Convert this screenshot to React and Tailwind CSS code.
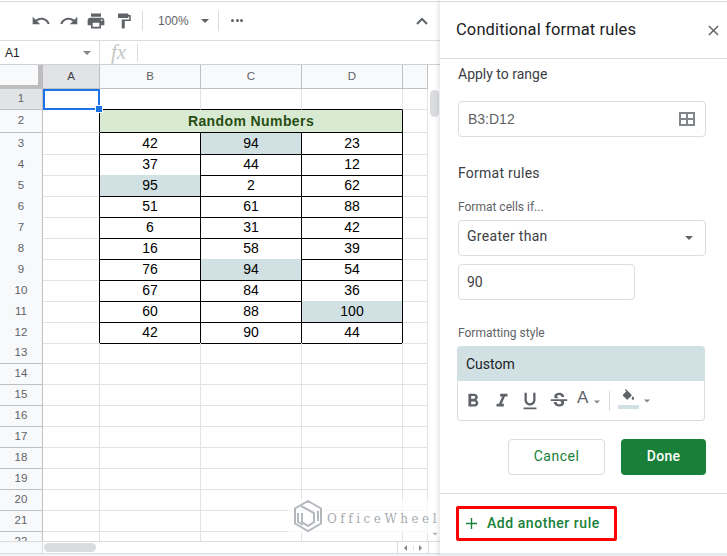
import { MdFormatBold, MdFormatItalic, MdFormatUnderlined, MdStrikethroughS } from 'react-icons/md'

const DATA = [
  [42, 94, 23],
  [37, 44, 12],
  [95, 2, 62],
  [51, 61, 88],
  [6, 31, 42],
  [16, 58, 39],
  [76, 94, 54],
  [67, 84, 36],
  [60, 88, 100],
  [42, 90, 44],
]

const EMPTY_ROWS = [13, 14, 15, 16, 17, 18, 19, 20, 21, 22]
const GRID_COLS = 'grid grid-cols-[43px_57px_101px_101px_101px_25px]'
const ARIAL = "font-['Liberation_Sans',Arial,sans-serif]"
const GOOGLE = "font-['Roboto','Noto_Sans',sans-serif]"

function Icon({ d, className }) {
  return (
    <svg viewBox="0 0 24 24" className={className} fill="currentColor">
      <path d={d} />
    </svg>
  )
}

function Caret({ className }) {
  return <div className={`w-0 h-0 border-x-[4px] border-x-transparent border-t-[4px] ${className}`} />
}

function Toolbar() {
  return (
    <div className="h-[39px] border-b border-[#dadce0] flex items-center text-[#5f6368] pb-[1px]">
      <Icon className="w-[20px] h-[20px] ml-[31px]" d="M12.5 8c-2.65 0-5.05.99-6.9 2.6L2 7v9h9l-3.62-3.62c1.39-1.16 3.16-1.88 5.12-1.88 3.54 0 6.55 2.31 7.6 5.5l2.37-.78C21.08 11.03 17.15 8 12.5 8z" />
      <Icon className="w-[20px] h-[20px] ml-[8px]" d="M18.4 10.6C16.55 8.99 14.15 8 11.5 8c-4.65 0-8.58 3.03-9.96 7.22L3.9 16c1.05-3.19 4.05-5.5 7.6-5.5 1.95 0 3.73.72 5.12 1.88L13 16h9V7l-3.6 3.6z" />
      <Icon className="w-[20px] h-[20px] ml-[7px]" d="M19 8H5c-1.66 0-3 1.34-3 3v6h4v4h12v-4h4v-6c0-1.66-1.34-3-3-3zm-3 11H8v-5h8v5zm3-7c-.55 0-1-.45-1-1s.45-1 1-1 1 .45 1 1-.45 1-1 1zm-1-9H6v4h12V3z" />
      <Icon className="w-[18px] h-[18px] ml-[9px]" d="M18 4V3c0-.55-.45-1-1-1H5c-.55 0-1 .45-1 1v4c0 .55.45 1 1 1h12c.55 0 1-.45 1-1V6h1v4H9v11c0 .55.45 1 1 1h2c.55 0 1-.45 1-1v-9h8V4h-3z" />
      <div className="w-px h-[20px] bg-[#dadce0] ml-[9px]" />
      <span className={`${ARIAL} text-[12px] ml-[15px] w-[42px]`}>100%</span>
      <Caret className="border-t-[#5f6368] ml-[1px]" />
      <div className="w-px h-[20px] bg-[#dadce0] ml-[9px]" />
      <div className="flex gap-[1.5px] ml-[12px]">
        <div className="w-[3px] h-[3px] rounded-full bg-[#5f6368]" />
        <div className="w-[3px] h-[3px] rounded-full bg-[#5f6368]" />
        <div className="w-[3px] h-[3px] rounded-full bg-[#5f6368]" />
      </div>
      <svg viewBox="0 0 12 8" className="w-[12px] h-[8px] ml-auto mr-[12px]" fill="none" stroke="#5f6368" strokeWidth="2">
        <path d="M1 7l5-5 5 5" />
      </svg>
    </div>
  )
}

function FormulaBar() {
  return (
    <div className={`h-[24px] border-b border-[#cfd1d4] flex items-center ${ARIAL}`}>
      <div className="w-[100px] h-full border-r border-[#dadce0] flex items-center pl-[5px] pr-[8px] text-[12px] text-[#202124]">
        <span>A1</span>
        <Caret className="border-t-[#80868b] ml-auto" />
      </div>
      <div className="w-[38px] h-[18px] border-r border-[#dadce0] flex items-center justify-center">
        <span className="font-['Liberation_Serif',serif] italic text-[21px] text-[#c4c7c5]">fx</span>
      </div>
    </div>
  )
}

function HeaderRow() {
  return (
    <div className={`${GRID_COLS} h-[24px] border-b border-[#c0c0c0] bg-[#f8f9fa] text-[11.5px] text-[#5f6368]`}>
      <div className="border-r-[5px] border-b-[3px] border-[#bdbdbd] bg-[#f8f9fa] w-[43px] h-[23px]" />
      <div className="border-r border-[#c0c0c0] bg-[#e2e3e6] flex items-center justify-center text-[#3c4043]">A</div>
      <div className="border-r border-[#c0c0c0] flex items-center justify-center">B</div>
      <div className="border-r border-[#c0c0c0] flex items-center justify-center">C</div>
      <div className="border-r border-[#c0c0c0] flex items-center justify-center">D</div>
      <div className="border-r border-[#c0c0c0]" />
    </div>
  )
}

function RowNum({ n, active }) {
  return (
    <div className={`border-r border-b border-[#c0c0c0] flex items-center justify-center text-[11.5px] text-[#5f6368] ${active ? 'bg-[#e2e3e6]' : 'bg-[#f8f9fa]'}`}>
      {n}
    </div>
  )
}

function DataRow({ n, values }) {
  return (
    <div className={`${GRID_COLS} h-[21px] text-[14px] text-black`}>
      <RowNum n={n} />
      <div className="border-r border-b border-r-black border-b-[#e2e3e3]" />
      {values.map((v, i) => (
        <div key={i} className={`border-r border-b border-black flex items-center justify-center ${v > 90 ? 'bg-[#d0e0e3]' : ''}`}>
          {v}
        </div>
      ))}
      <div className="border-r border-b border-[#e2e3e3]" />
    </div>
  )
}

function Sheet() {
  return (
    <div className={`relative flex-1 min-h-0 overflow-hidden ${ARIAL}`}>
      <div className="flex h-full">
        <div className="w-[428px] overflow-hidden">
          <HeaderRow />
          <div className={`${GRID_COLS} h-[21px]`}>
            <RowNum n={1} active />
            <div className="border-r border-b border-[#e2e3e3]" />
            <div className="border-r border-b border-r-[#e2e3e3] border-b-black" />
            <div className="border-r border-b border-r-[#e2e3e3] border-b-black" />
            <div className="border-r border-b border-r-[#e2e3e3] border-b-black" />
            <div className="border-r border-b border-[#e2e3e3]" />
          </div>
          <div className={`${GRID_COLS} h-[23px]`}>
            <RowNum n={2} />
            <div className="border-r border-b border-r-black border-b-[#e2e3e3]" />
            <div className="col-span-3 border-r border-b border-black bg-[#d9ead3] text-[#274e13] font-bold text-[14px] tracking-[0.4px] flex items-center justify-center">
              Random Numbers
            </div>
            <div className="border-r border-b border-[#e2e3e3]" />
          </div>
          {DATA.map((values, i) => (
            <DataRow key={i} n={i + 3} values={values} />
          ))}
          {EMPTY_ROWS.map(n => (
            <div key={n} className={`${GRID_COLS} h-[21px]`}>
              <RowNum n={n} />
              <div className="border-r border-b border-[#e2e3e3]" />
              <div className="border-r border-b border-[#e2e3e3]" />
              <div className="border-r border-b border-[#e2e3e3]" />
              <div className="border-r border-b border-[#e2e3e3]" />
              <div className="border-r border-b border-[#e2e3e3]" />
            </div>
          ))}
        </div>
        <div className="w-[12px] pl-[2px] pt-[25px] pb-[5px] flex flex-col">
          <div className="w-[9px] h-[27px] rounded-full bg-[#dadce0]" />
          <Caret className="border-t-[#b0b3b8] mt-auto ml-[1px] scale-75" />
        </div>
      </div>
      {/* selected cell */}
      <div className="absolute left-[43px] top-[24px] w-[57px] h-[21px] border-2 border-[#1a73e8]" />
      <div className="absolute left-[96px] top-[41px] w-[6px] h-[6px] bg-[#1a73e8] outline outline-1 outline-white" />
      <Watermark />
    </div>
  )
}

function Watermark() {
  return (
    <div className="absolute left-[288px] top-[434px] w-[152px] h-[34px] bg-white/70 flex items-center">
      <svg viewBox="0 0 30 32" className="w-[30px] h-[32px] ml-[5px]" fill="none" stroke="#b4b8bd" strokeWidth="2">
        <path d="M15 1l13 7.5v15L15 31 2 23.5v-15z" />
        <path d="M8 6l13 7v9l-6 4-6-4v-9" />
        <path d="M5 13v9l5 3M25 11v10" />
      </svg>
      <span className="font-['DejaVu_Serif',serif] text-[12px] tracking-[3.5px] text-[#a8acb1] ml-[4px] mt-[5px] whitespace-nowrap">OfficeWheel</span>
    </div>
  )
}

function SheetFooter() {
  return (
    <div className="h-[12px] flex border-t border-[#dadce0] bg-white">
      <div className="w-[43px] border-r border-[#dadce0] bg-[#f8f9fa]" />
      <div className="w-[52px] h-[9px] mt-[1px] ml-[1px] rounded-full bg-[#dadce0]" />
      <div className="ml-auto flex items-center w-[32px] h-full border-x border-[#dadce0] mr-[11px]">
        <div className="w-[16px] flex justify-center border-r border-[#e8eaed]">
          <div className="w-0 h-0 border-y-[3px] border-y-transparent border-r-[3px] border-r-[#80868b]" />
        </div>
        <div className="w-[15px] flex justify-center">
          <div className="w-0 h-0 border-y-[3px] border-y-transparent border-l-[3px] border-l-[#80868b]" />
        </div>
      </div>
    </div>
  )
}

function Field({ children, className }) {
  return (
    <div className={`h-[36px] border border-[#dadce0] rounded-[4px] flex items-center ${className}`}>
      {children}
    </div>
  )
}

function StyleBar() {
  return (
    <div className="h-[40px] border border-t-0 border-[#dadce0] rounded-b-[4px] flex items-center gap-[6.5px] text-[#5f6368] pl-[4px]">
      <MdFormatBold className="w-[22px] h-[22px]" />
      <MdFormatItalic className="w-[22px] h-[22px]" />
      <MdFormatUnderlined className="w-[22px] h-[22px]" />
      <MdStrikethroughS className="w-[22px] h-[22px]" />
      <span className={`${ARIAL} text-[17px] ml-[1px] -mt-[6px]`}>A</span>
      <Caret className="border-t-[#80868b] -ml-[2px] mt-[3px] scale-75" />
      <div className="w-px h-[20px] bg-[#dadce0] ml-[2px]" />
      <div className="ml-[1px] -mt-[4px] flex flex-col items-center">
        <Icon className="w-[17px] h-[15px]" d="M16.56 8.94L7.62 0 6.21 1.41l2.38 2.38-5.15 5.15c-.59.59-.59 1.54 0 2.12l5.5 5.5c.29.29.68.44 1.06.44s.77-.15 1.06-.44l5.5-5.5c.59-.58.59-1.53 0-2.12zM19 11.5s-2 2.17-2 3.5c0 1.1.9 2 2 2s2-.9 2-2c0-1.33-2-3.5-2-3.5z" />
        <div className="w-[21px] h-[4px] bg-[#d0e0e3] mt-[1px]" />
      </div>
      <Caret className="border-t-[#80868b] -ml-[2px] scale-75" />
    </div>
  )
}

function Panel() {
  return (
    <div className={`w-[287px] h-[556px] flex flex-col bg-white relative z-10 shadow-[-2px_0_4px_rgba(0,0,0,0.1)] ${GOOGLE}`}>
      <div className="h-[1px] mt-[1px] bg-[#dadce0]" />
      <div className="h-[57px] border-b border-[#dadce0] flex items-center pl-[16px] pr-[8px] shrink-0">
        <span className="text-[16.5px] text-[#202124] tracking-[0.12px]">Conditional format rules</span>
        <svg viewBox="0 0 12 12" className="w-[11px] h-[11px] ml-auto" fill="none" stroke="#5f6368" strokeWidth="1.6">
          <path d="M1 1l10 10M11 1L1 11" />
        </svg>
      </div>
      <div className="flex-1 pl-[18px] pr-[21px] flex flex-col">
        <div className="text-[14px] text-[#3c4043] mt-[5px] leading-[20px]">Apply to range</div>
        <Field className="mt-[17px] px-[9px] justify-between text-[14px] text-[#5f6368]">
          <span className={ARIAL}>B3:D12</span>
          <svg viewBox="0 0 16 14" className="w-[16px] h-[14px] mr-[1px]" fill="none" stroke="#80868b" strokeWidth="2">
            <path d="M1 1h14v12H1zM8 1v12M1 7h14" />
          </svg>
        </Field>
        <div className="text-[14px] text-[#3c4043] tracking-[0.25px] mt-[26px] leading-[20px]">Format rules</div>
        <div className="text-[12px] text-[#5f6368] mt-[16px] leading-[16px]">Format cells if...</div>
        <Field className="mt-[5px] px-[8px] pb-[3px] justify-between text-[14px] text-[#3c4043]">
          <span className="tracking-[0.3px]">Greater than</span>
          <Caret className="border-t-[#5f6368] mr-[4px] mt-[3px]" />
        </Field>
        <Field className="mt-[8px] w-[177px] px-[8px] text-[14px] text-[#3c4043]">
          <span>90</span>
        </Field>
        <div className="text-[12px] text-[#5f6368] mt-[25px] leading-[16px]">Formatting style</div>
        <div className="mt-[5px] -ml-[1px] w-[248px]">
          <div className="h-[35px] bg-[#d0e0e3] rounded-t-[4px] flex items-center pl-[9px] pt-[1px] text-[14px] text-[#202124]">Custom</div>
          <StyleBar />
        </div>
        <div className="flex justify-end gap-[16px] mt-[18px]">
          <button className="w-[97px] h-[36px] border border-[#dadce0] rounded-[4px] text-[14px] text-[#188038] tracking-[0.5px] pb-[1px]">Cancel</button>
          <button className="w-[85px] h-[36px] rounded-[4px] bg-[#188038] text-[14px] font-medium text-white tracking-[0.3px] pb-[1px]">Done</button>
        </div>
      </div>
      <div className="h-[63px] border-t border-[#dadce0] border-b-[3px] border-b-[#e8eaed] pl-[16px] pt-[12px] shrink-0">
        <div className="w-[161px] h-[35px] border-[3px] border-[#ff0000] rounded-[2px] flex items-center pl-[7px] text-[#188038]">
          <svg viewBox="0 0 12 12" className="w-[11px] h-[11px]" fill="none" stroke="currentColor" strokeWidth="1.5">
            <path d="M6 0v12M0 6h12" />
          </svg>
          <span className="text-[14px] font-medium ml-[10px] tracking-[0.55px]">Add another rule</span>
        </div>
      </div>
    </div>
  )
}

export default function App() {
  return (
    <div className="w-[727px] h-[556px] flex overflow-hidden bg-white">
      <div className="w-[440px] h-[556px] flex flex-col">
        <div className="h-[1px] shrink-0" />
        <div className="h-[1px] bg-[#dadce0] shrink-0" />
        <Toolbar />
        <FormulaBar />
        <Sheet />
        <SheetFooter />
        <div className="h-[3px] bg-[#f1f3f4] border-t border-[#dadce0] shrink-0" />
      </div>
      <Panel />
    </div>
  )
}
